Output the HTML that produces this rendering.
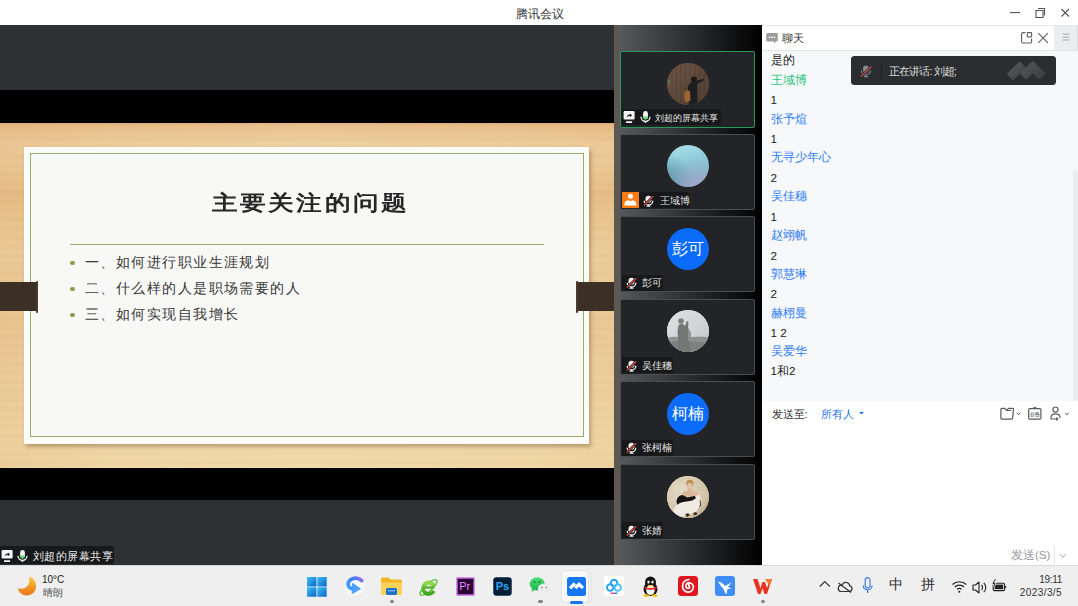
<!DOCTYPE html>
<html><head><meta charset="utf-8">
<style>
*{margin:0;padding:0;box-sizing:border-box}
html,body{width:1078px;height:606px;overflow:hidden;background:#fff;font-family:"Liberation Sans",sans-serif}
.a{position:absolute}
#title{left:0;top:0;width:1078px;height:25px;background:#fff}
#title .t{left:515.5px;top:6px;font-size:11.5px;line-height:16px;color:#333;white-space:nowrap}
#share{left:0;top:25px;width:614px;height:540px;background:#2e3134;overflow:hidden}
.blk{background:#000}
#wood{left:0;top:98px;width:614px;height:345px;
 background:
 repeating-linear-gradient(180deg,rgba(255,240,210,0) 0px,rgba(255,240,210,.07) 2px,rgba(200,140,80,0) 4px,rgba(200,140,80,.03) 7px,rgba(255,240,210,0) 9px),
 linear-gradient(90deg,rgba(215,140,80,.12) 0%,rgba(215,140,80,0) 18%,rgba(255,245,220,.08) 50%,rgba(215,140,80,0) 85%,rgba(215,140,80,.06) 100%),
 linear-gradient(180deg,#e0aa74 0px,#e8bf8a 4px,#ebcd9a 22px,#eaca95 45px,#e6be88 70px,#e9c791 95px,#eccf9a 130px,#eaca95 200px,#ecd09c 250px,#efd7a6 320px,#eed5a3 345px)}
#paper{left:24px;top:24px;width:565px;height:297px;background:#fcfcfb;box-shadow:2px 3px 4px rgba(90,60,20,.35)}
#pline{left:6px;top:6px;width:554px;height:284px;border:1.3px solid #97ab6a;background:#f8f8f7}
#stitle{left:4px;top:41px;width:565px;text-align:center;font-size:25px;font-weight:bold;color:#262626;letter-spacing:3.1px;transform:scaleY(.82);line-height:30px;white-space:nowrap}
#hr{left:46px;top:97px;width:474px;height:1.3px;background:#9aae68}
.bul{left:61px;font-size:13.5px;color:#383838;letter-spacing:1.45px;line-height:16px;white-space:nowrap}
.dot{left:-15px;top:5.5px;width:4.6px;height:4.6px;border-radius:50%;background:#86a04a}
.tab{background:#3b2f26}
#vcol{left:614px;top:25px;width:148px;height:540px;background:linear-gradient(90deg,#55585c 0px,#55585c 6px,#000 148px)}
#vsep{left:614px;top:25px;width:6px;height:540px;background:#5e5854}
.tile{left:620px;width:135px;height:76px;background:#232427;border:1px solid #4a4c50;border-radius:2px}
.av{left:46px;top:10.6px;width:42px;height:42px;border-radius:50%;overflow:hidden}
.lab{left:1px;height:16px;background:#17181a;border-radius:0 2px 0 0}
.lab .n{position:absolute;top:2.6px;font-size:10px;line-height:12px;color:#e8e8e8;white-space:nowrap}
#chat{left:762px;top:25px;width:316px;height:540px;background:#f7f8fa}
#chead{left:0;top:0;width:316px;height:26px;background:#fff;border-top:1px solid #e8e8e8;border-bottom:1px solid #e3e4e6}
.msg{left:8.6px;font-size:11.7px;line-height:16px;color:#222;white-space:nowrap}
.nm{left:8.8px;font-size:11.5px;line-height:16px;color:#2f7cf5;white-space:nowrap}
#input{left:0;top:376px;width:316px;height:164px;background:#fff}
#task{left:0;top:565px;width:1078px;height:41px;background:#efefef;border-top:1px solid #d9d9d9}
.ti{top:11px;width:20px;height:20px}
</style></head><body>
<svg width="0" height="0" style="position:absolute">
<defs>
 <symbol id="mmic" viewBox="0 0 12 12">
  <rect x="2.7" y="0.2" width="6.6" height="7.6" rx="3.3" fill="#f0f0f0"/>
  <path d="M1.3 5.6a4.7 4.7 0 0 0 9.4 0" stroke="#f0f0f0" stroke-width="1.4" fill="none"/>
  <path d="M6 10v1.6M3.9 11.5h4.2" stroke="#f0f0f0" stroke-width="1.4"/>
  <path d="M0.9 11.1L11.2 0.8" stroke="#17181a" stroke-width="2.6"/>
  <path d="M0.9 11.1L11.2 0.8" stroke="#e4463b" stroke-width="1.3"/>
 </symbol>
 <symbol id="mic" viewBox="0 0 11 13">
  <path d="M3.1 2.4a2.4 2.4 0 0 1 4.8 0v3.6a2.4 2.4 0 0 1-4.8 0z" fill="#f6f6f6"/>
  <path d="M3.1 5.6h4.8v.4a2.4 2.4 0 0 1-4.8 0z" fill="#55e068"/>
  <path d="M1 5.8a4.5 4.5 0 0 0 9 0" stroke="#f6f6f6" stroke-width="1.3" fill="none"/>
  <path d="M5.5 10v2" stroke="#f6f6f6" stroke-width="1.4"/>
 </symbol>
 <symbol id="scr" viewBox="0 0 12 13">
  <rect x="0.6" y="0" width="11" height="8.4" rx="1.2" fill="#f6f6f6"/>
  <path d="M3.6 6.3c.3-1.7 1.5-2.7 3.3-2.8V2.4l2.2 1.9-2.2 1.9V5c-1.3 0-2.4.4-3.3 1.3z" fill="#1a1a1a"/>
  <rect x="3" y="10.2" width="6.2" height="1.7" rx=".4" fill="#f6f6f6"/>
 </symbol>
</defs></svg>
<div id="title" class="a"><div class="t a">腾讯会议</div>
 <svg class="a" style="left:1005px;top:5px" width="70" height="16" viewBox="0 0 70 16">
  <path d="M5 7.6H15" stroke="#555" stroke-width="1.1"/>
  <path d="M31 5.5h7v7h-7z" stroke="#555" stroke-width="1.1" fill="none"/>
  <path d="M33 3.5h6.5v7" stroke="#555" stroke-width="1.1" fill="none"/>
  <path d="M56.5 4L64 11.5M64 4L56.5 11.5" stroke="#555" stroke-width="1.1"/>
 </svg>
</div>

<div id="share" class="a">
 <div class="a blk" style="left:0;top:65px;width:614px;height:410px"></div>
 <div id="wood" class="a">
  <div id="paper" class="a">
   <div id="pline" class="a"></div>
   <div id="stitle" class="a">主要关注的问题</div>
   <div id="hr" class="a"></div>
   <div class="a bul" style="top:108px"><span class="a dot"></span>一、如何进行职业生涯规划</div>
   <div class="a bul" style="top:134px"><span class="a dot"></span>二、什么样的人是职场需要的人</div>
   <div class="a bul" style="top:160px"><span class="a dot"></span>三、如何实现自我增长</div>
  </div>
  <div class="a tab" style="left:0;top:159px;width:37px;height:29px"></div><div class="a tab" style="left:36px;top:157.5px;width:2.2px;height:32px;border-radius:1px;background:#4a3a2c"></div>
  <div class="a tab" style="left:577px;top:159px;width:37px;height:29px"></div><div class="a tab" style="left:575.8px;top:157.5px;width:2.2px;height:32px;border-radius:1px;background:#4a3a2c"></div>
 </div>
 <div class="a" style="left:0;top:520.6px;width:114px;height:18.2px;background:#17191b;border-radius:0 3px 3px 0">
  <svg class="a" style="left:0.5px;top:4.5px" width="12" height="13"><use href="#scr"/></svg><svg class="a" style="left:16.5px;top:4.5px" width="11" height="13"><use href="#mic"/></svg><div class="a" style="left:32.5px;top:3.4px;font-size:11.4px;letter-spacing:0.5px;line-height:14px;color:#eee;white-space:nowrap">刘超的屏幕共享</div>
 </div>
</div>

<div id="vcol" class="a"></div>
<div id="vsep" class="a"></div>

<div class="a tile" style="top:51px;height:77px;border:1.3px solid #2a9a5a"><div class="a av" style="background:#5a4539"><svg width="42" height="42" viewBox="0 0 42 42">
<defs><linearGradient id="wd" x1="0" y1="0" x2="1" y2="1"><stop offset="0" stop-color="#6e5646"/><stop offset="1" stop-color="#4f3d32"/></linearGradient></defs>
<rect width="42" height="42" fill="url(#wd)"/>
<g stroke="#3e2e25" stroke-width="1.1" opacity=".3"><path d="M5 0v42M9.5 0v42M14 0v42M18.5 0v42M23 0v42M28 0v42M33 0v42M37.5 0v42"/></g>
<path d="M0.5 15.5q2.5 1 3 3.5-.5 2.5-2.5 3z" fill="#5d7448" opacity=".8"/>
<path d="M21 24q.5-4 5-5.5l3-.5 7.5-2.3.8 1.6-6.5 3.3-.5 1.5.2 20h-8.5l-.5-6q-1.5-6-.5-12z" fill="#1d1e21"/>
<circle cx="27" cy="16.3" r="2.9" fill="#17181b"/>
<path d="M17.3 30.5q.8-3.2 3.6-3.3l2.3 1.3.2 9q-2.2 2-5 1.2-1.5-3-1.1-8.2z" fill="#9c6430"/>
</svg></div>
 <div class="a lab" style="left:1px;top:57.4px;width:99px"><svg class="a" style="left:1px;top:2px" width="12" height="13"><use href="#scr"/></svg><svg class="a" style="left:17.5px;top:2px" width="11" height="13"><use href="#mic"/></svg><div class="n" style="left:33px;font-size:9.3px">刘超的屏幕共享</div></div></div>
<div class="a tile" style="top:133.6px"><div class="a av" style="background:radial-gradient(circle at 70% 100%,rgba(170,160,205,.75) 0,rgba(160,160,200,0) 55%),radial-gradient(circle at 0% 85%,rgba(90,140,160,.8) 0,rgba(90,140,160,0) 50%),linear-gradient(165deg,#b0e2ea 0%,#8fd0dc 35%,#86bccb 65%,#8aa8bf 100%)"></div>
 <div class="a lab" style="top:57.4px;width:67px;background:#17181a"><div class="a" style="left:0;top:0;width:17px;height:16px;background:#f97d16"></div><svg class="a" style="left:0;top:0" width="17" height="16" viewBox="0 0 17 16"><circle cx="8.4" cy="4.3" r="2.5" fill="#fff"/><path d="M2.3 13.4Q2.3 8.6 6.2 8.2Q8.4 9.6 10.6 8.2Q14.5 8.6 14.5 13.4z" fill="#fff"/></svg><svg class="a" style="left:21px;top:2.6px" width="11" height="12"><use href="#mmic"/></svg><div class="n" style="left:38px">王域博</div></div></div>
<div class="a tile" style="top:216.2px"><div class="a av" style="background:#0b6bfb;color:#fff;font-size:15.5px;text-align:center;line-height:42px">彭可</div>
 <div class="a lab" style="top:57.4px;width:41px"><svg class="a" style="left:4px;top:2.6px" width="11" height="12"><use href="#mmic"/></svg><div class="n" style="left:20px">彭可</div></div></div>
<div class="a tile" style="top:298.8px"><div class="a av" style="background:#c9cdcc"><svg width="42" height="42" viewBox="0 0 42 42">
<defs><linearGradient id="sk" x1="0" y1="0" x2="1" y2="1"><stop offset="0" stop-color="#dfe3e3"/><stop offset="1" stop-color="#c3c7c7"/></linearGradient></defs>
<rect width="42" height="42" fill="url(#sk)"/>
<path d="M0 28q6-2 12-1t14 0 16 .5V42H0z" fill="#8e9290"/>
<path d="M0 33q10-3 20-2t22 1V42H0z" fill="#7d817f"/>
<path d="M11 16q2-3 5-2l2 2 2-5 1.5 1-.5 6 2 3 .5 21h-13l.5-14q-1-8 .5-12z" fill="#727874"/>
<circle cx="14" cy="11" r="2.8" fill="#7a7f7c"/>
<path d="M21 18l3 5-.5 10-2.5-3z" fill="#8d9290"/>
</svg></div>
 <div class="a lab" style="top:57.4px;width:51px"><svg class="a" style="left:4px;top:2.6px" width="11" height="12"><use href="#mmic"/></svg><div class="n" style="left:20px">吴佳穗</div></div></div>
<div class="a tile" style="top:381.4px"><div class="a av" style="background:#0b6bfb;color:#fff;font-size:15.5px;text-align:center;line-height:42px">柯楠</div>
 <div class="a lab" style="top:57.4px;width:51px"><svg class="a" style="left:4px;top:2.6px" width="11" height="12"><use href="#mmic"/></svg><div class="n" style="left:20px">张柯楠</div></div></div>
<div class="a tile" style="top:464px"><div class="a av" style="background:#d4c6a9"><svg width="42" height="42" viewBox="0 0 42 42">
<defs><radialGradient id="bg6" cx=".35" cy=".35" r=".85"><stop offset="0" stop-color="#e4dac6"/><stop offset=".7" stop-color="#d2c3a6"/><stop offset="1" stop-color="#a8916e"/></radialGradient></defs>
<rect width="42" height="42" fill="url(#bg6)"/>
<path d="M16 16q6.5-3.5 14 0l2 6-17 1z" fill="#d9b999"/>
<ellipse cx="22.8" cy="7.4" rx="3.6" ry="3.6" fill="#bf8f55"/>
<ellipse cx="22.8" cy="10" rx="2.6" ry="3.2" fill="#e0c3a4"/>
<path d="M21.2 12.5h3.2v4h-3.2z" fill="#d8b796"/>
<path d="M9.5 25q1-5.5 6-6l5 2.5 7-1.5 5.5 1.5.8 8-3 4.5H11z" fill="#151414"/>
<path d="M6.5 33.5q3.5-7 10-7.5l9-1.5q4-3.5 7-2.5l.5 7q-1 6-6.5 8l-8 3q-8 1.5-12.5-1.5z" fill="#efebe3"/>
<path d="M28 20l4.5-1.5 1.5 5.5-4 1.5z" fill="#ece6da"/>
<path d="M18 38.5l3-1.5 2 2-3 2zM26 37l3-1 1.5 2-3 1.5z" fill="#3b3028"/>
</svg></div>
 <div class="a lab" style="top:57.4px;width:41px"><svg class="a" style="left:4px;top:2.6px" width="11" height="12"><use href="#mmic"/></svg><div class="n" style="left:20px">张婧</div></div></div>

<div id="chat" class="a">
 <div id="chead" class="a">
  <svg class="a" style="left:4px;top:6px" width="13" height="13" viewBox="0 0 13 13"><path d="M1.5 1h9a1.3 1.3 0 0 1 1.3 1.3v6a1.3 1.3 0 0 1-1.3 1.3H10l-1.7 1.8-.3-1.8H1.5A1.3 1.3 0 0 1 .2 8.3v-6A1.3 1.3 0 0 1 1.5 1z" fill="#9b9b9b"/><circle cx="3.6" cy="5.3" r=".9" fill="#fff"/><circle cx="6" cy="5.3" r=".9" fill="#fff"/><circle cx="8.4" cy="5.3" r=".9" fill="#fff"/></svg>
  <div class="a" style="left:20px;top:4.6px;font-size:10.7px;line-height:14px;color:#333">聊天</div>
  <svg class="a" style="left:258px;top:5px" width="30" height="13" viewBox="0 0 30 13"><path d="M5.5 1.6H2.8a1.2 1.2 0 0 0-1.2 1.2v8a1.2 1.2 0 0 0 1.2 1.2h7.6a1.2 1.2 0 0 0 1.2-1.2V7.6" stroke="#5c5f66" stroke-width="1.1" fill="none"/><rect x="7.3" y="1.6" width="4.3" height="4.3" rx=".6" stroke="#5c5f66" stroke-width="1.1" fill="none"/><path d="M18.3 2.2l9.6 9.6M27.9 2.2l-9.6 9.6" stroke="#5c5f66" stroke-width="1.1"/></svg>
 </div>
 <div class="a" style="left:292px;top:1px;width:24px;height:24px;background:#ebedf0;border-right:1px solid #dcdde0"><svg class="a" style="left:8px;top:7.4px" width="8" height="8" viewBox="0 0 8 8"><path d="M.5 1.2h7M.5 4.2h7M.5 7h7" stroke="#a9abb0" stroke-width="1"/></svg></div>
 <div class="a msg" style="top:27px">是的</div>
 <div class="a nm" style="top:47px;color:#1fc47a">王域博</div>
 <div class="a msg" style="top:67px">1</div>
 <div class="a nm" style="top:86px">张予煊</div>
 <div class="a msg" style="top:106px">1</div>
 <div class="a nm" style="top:124px">无寻少年心</div>
 <div class="a msg" style="top:145px">2</div>
 <div class="a nm" style="top:163px">吴佳穗</div>
 <div class="a msg" style="top:184px">1</div>
 <div class="a nm" style="top:202px">赵翊帆</div>
 <div class="a msg" style="top:223px">2</div>
 <div class="a nm" style="top:241px">郭慧琳</div>
 <div class="a msg" style="top:261px">2</div>
 <div class="a nm" style="top:280px">赫栩曼</div>
 <div class="a msg" style="top:300px">1 2</div>
 <div class="a nm" style="top:318px">吴爱华</div>
 <div class="a msg" style="top:338px">1和2</div>
 <div class="a" style="left:311px;top:145px;width:5px;height:231px;background:#ebecef;border-radius:2px"></div>
 <div class="a" style="left:89px;top:30.7px;width:205px;height:29.6px;background:#2b2e31;border-radius:3.5px">
  <svg class="a" style="left:9px;top:9px" width="12" height="13" viewBox="0 0 12 13"><rect x="3.1" y="0.4" width="5.6" height="7.6" rx="2.8" fill="#85888d"/><path d="M1.4 5.4a4.5 4.5 0 0 0 9 0" stroke="#85888d" stroke-width="1.2" fill="none"/><path d="M5.9 9.9v1.6M3.9 11.6h4" stroke="#85888d" stroke-width="1.2"/><path d="M0.6 11.6L11.6 1.4" stroke="#2b2e31" stroke-width="2.4"/><path d="M0.6 11.6L11.6 1.4" stroke="#d8463c" stroke-width="1.2"/></svg>
  <div class="a" style="left:29.5px;top:7px;width:1.2px;height:16px;background:#1c1e20"></div>
  <svg class="a" style="left:155px;top:5.6px" width="42" height="21" viewBox="0 0 42 21"><defs><linearGradient id="lg1" x1="0" y1="0" x2="1" y2="1"><stop offset="0" stop-color="#5a5c60"/><stop offset="1" stop-color="#3d3f42"/></linearGradient></defs><g fill="url(#lg1)" stroke="url(#lg1)" stroke-width="2.4" stroke-linejoin="round"><path d="M2.4 13.2L13.6 2 18.2 6.6 7 17.8z"/><path d="M15.4 12.4L26.8 1.6 37.9 12.7 33.5 17.1 26.9 10.5 20.3 17.1z" opacity=".92"/></g></svg>
  <div class="a" style="left:38px;top:9.5px;font-size:10.8px;line-height:13px;color:#ddd;white-space:nowrap;letter-spacing:-0.9px">正在讲话: 刘超;</div>
 </div>
 <div id="input" class="a">
  <div class="a" style="left:9.6px;top:5.6px;font-size:11.2px;line-height:15px;color:#333">发送至:</div>
  <div class="a" style="left:58.8px;top:5.5px;font-size:11.4px;line-height:15px;color:#1f74f0">所有人</div>
  <svg class="a" style="left:97.2px;top:11.2px" width="5" height="3" viewBox="0 0 5 3"><path d="M0 0h5L2.5 2.6z" fill="#1f74f0"/></svg>
  <svg class="a" style="left:237px;top:4px" width="72" height="16" viewBox="0 0 72 16">
   <path d="M12.6 14.1H2.9Q1.9 14.1 1.9 13.1V4.3Q1.9 3.3 2.9 3.3H5.7L7.7 5.5H12.2" stroke="#575b63" stroke-width="1.2" fill="none" stroke-linejoin="round"/>
   <path d="M7.7 5.5L9.4 3.3H13.5Q14.6 3.3 14.5 4.3L13.6 13.1Q13.5 14.1 12.5 14.1" stroke="#575b63" stroke-width="1.2" fill="none" stroke-linejoin="round"/>
   <path d="M17.7 7.8l1.9 1.7 1.9-1.7" stroke="#575b63" stroke-width="1" fill="none"/>
   <rect x="29.7" y="3.6" width="12.2" height="10.5" rx="1.2" stroke="#575b63" stroke-width="1.2" fill="none"/>
   <path d="M34 3.6q1.8-2.6 3.6 0" stroke="#575b63" stroke-width="1.1" fill="none"/>
   <text x="35.8" y="11.3" font-size="5" font-weight="bold" text-anchor="middle" fill="#575b63" font-family="Liberation Sans">公告</text>
   <circle cx="56.5" cy="4.6" r="2.6" stroke="#575b63" stroke-width="1.2" fill="none"/>
   <path d="M52 14v-1.4c0-2.2 1.8-3.7 4.5-3.7s4.5 1.5 4.5 3.7M52 14h6.8l-1.1 1.1M58.8 14l-1.1-1.1" stroke="#575b63" stroke-width="1.2" fill="none" stroke-linecap="round" stroke-linejoin="round"/>
   <path d="M66 8l1.9 1.7 1.9-1.7" stroke="#575b63" stroke-width="1" fill="none"/>
  </svg>
  <div class="a" style="left:249px;top:146px;font-size:11.6px;line-height:16px;color:#999">发送(S)</div>
  <div class="a" style="left:292px;top:144.5px;width:1px;height:18px;background:#e3e3e3"></div>
  <svg class="a" style="left:297px;top:152px" width="8" height="6" viewBox="0 0 8 6"><path d="M1 1.2l3 3 3-3" stroke="#aaa" stroke-width="1" fill="none"/></svg>
 </div>
</div>

<div id="task" class="a">

 <svg class="a" style="left:15px;top:9px" width="24" height="22" viewBox="0 0 24 22"><defs><linearGradient id="moon" x1="0" y1="0" x2="0" y2="1"><stop offset="0" stop-color="#f9c93c"/><stop offset="1" stop-color="#ea7418"/></linearGradient><mask id="mm"><rect width="24" height="22" fill="#fff"/><circle cx="6.2" cy="5.6" r="8.2" fill="#000"/></mask></defs><circle cx="11.8" cy="11" r="9.4" fill="url(#moon)" mask="url(#mm)"/></svg>
 <svg class="a" style="left:306px;top:10px" width="22" height="22" viewBox="0 0 22 22"><defs><linearGradient id="win" x1="0" y1="0" x2="1" y2="1"><stop offset="0" stop-color="#3ec1f7"/><stop offset="1" stop-color="#0a64c9"/></linearGradient></defs><rect x="1" y="1" width="9.4" height="9.4" rx=".5" fill="url(#win)"/><rect x="11.3" y="1" width="9.4" height="9.4" rx=".5" fill="url(#win)"/><rect x="1" y="11.3" width="9.4" height="9.4" rx=".5" fill="url(#win)"/><rect x="11.3" y="11.3" width="9.4" height="9.4" rx=".5" fill="url(#win)"/></svg>
 <svg class="a" style="left:344px;top:10px" width="21" height="21" viewBox="0 0 21 21"><defs><linearGradient id="sw" x1="1" y1="0" x2="0" y2="1"><stop offset="0" stop-color="#9a6cf0"/><stop offset=".35" stop-color="#3d7ef5"/><stop offset="1" stop-color="#42a6ff"/></linearGradient></defs><circle cx="10.5" cy="10.5" r="9.6" fill="#f8f8f8"/><path d="M17.6 4.6C15 1.6 9.5 1 6 4.2 3 7 3.6 11.4 7.6 12.6" stroke="url(#sw)" stroke-width="3.8" fill="none" stroke-linecap="round"/><path d="M8.6 7.4L16.4 12.8 8.2 17.6z" fill="#4aa0ff" stroke="#4aa0ff" stroke-width="1" stroke-linejoin="round"/></svg>
 <svg class="a" style="left:380px;top:10px" width="23" height="20" viewBox="0 0 23 20"><path d="M1 3a1.5 1.5 0 0 1 1.5-1.5h6l2 2h10a1.5 1.5 0 0 1 1.5 1.5v12.5a1.5 1.5 0 0 1-1.5 1.5h-18A1.5 1.5 0 0 1 1 17.5z" fill="#f2b824"/><path d="M1 6.5h21v11a1.5 1.5 0 0 1-1.5 1.5h-18A1.5 1.5 0 0 1 1 17.5z" fill="#fbd35a"/><rect x="6" y="12" width="11" height="7" rx="1.5" fill="#1d72c9"/><rect x="8" y="14" width="7" height="1.4" fill="#6fb3f0"/></svg>
 <div class="a" style="left:389.5px;top:34px;width:4.5px;height:2.5px;border-radius:1.5px;background:#858585"></div>
 <svg class="a" style="left:418px;top:10px" width="21" height="22" viewBox="0 0 21 22"><defs><linearGradient id="ie" x1="0" y1="0" x2="0" y2="1"><stop offset="0" stop-color="#8fd94a"/><stop offset="1" stop-color="#3ba51d"/></linearGradient></defs><ellipse cx="10.5" cy="11.5" rx="11" ry="3.6" transform="rotate(-42 10.5 11.5)" stroke="#62c23a" stroke-width="1.4" fill="none"/><path d="M15.8 14.8A5.7 5.7 0 1 1 16.1 10.4" stroke="url(#ie)" stroke-width="3.8" fill="none"/><rect x="5" y="10.2" width="11.2" height="2.6" fill="#5dbb33"/></svg>
 <svg class="a" style="left:456px;top:10.7px" width="19" height="19" viewBox="0 0 20 20"><rect x="0.3" y="0.3" width="19.4" height="19.4" rx="1" fill="#c86ee6"/><rect x="1.8" y="1.8" width="16.4" height="16.4" rx=".5" fill="#2a0433"/><text x="3.4" y="13.4" font-size="11.5" font-family="Liberation Sans" fill="#e58cff">Pr</text></svg>
 <svg class="a" style="left:493px;top:10.7px" width="19" height="19" viewBox="0 0 20 20"><rect x="0.3" y="0.3" width="19.4" height="19.4" rx="3.5" fill="#001e36"/><text x="3" y="13.4" font-size="11.5" font-weight="bold" font-family="Liberation Sans" fill="#31a8ff">Ps</text></svg>
 <svg class="a" style="left:529px;top:10px" width="23" height="21" viewBox="0 0 23 21"><defs><linearGradient id="wx" x1="0" y1="0" x2="0" y2="1"><stop offset="0" stop-color="#4fe07a"/><stop offset="1" stop-color="#20b64f"/></linearGradient></defs><ellipse cx="8.2" cy="7.8" rx="7.6" ry="6.6" fill="url(#wx)"/><path d="M3.2 12.5l-.6 3.2 3.4-1.9z" fill="#22b850"/><circle cx="5.6" cy="5.8" r=".9" fill="#1a5d30"/><circle cx="10.6" cy="5.8" r=".9" fill="#1a5d30"/><ellipse cx="15.2" cy="13" rx="6.4" ry="5.4" fill="#ececec"/><path d="M18.5 17.2l1.2 2.2-3.2-1.2z" fill="#ececec"/><circle cx="12.9" cy="11.6" r=".75" fill="#777"/><circle cx="17.3" cy="11.6" r=".75" fill="#777"/></svg>
 <div class="a" style="left:538px;top:34px;width:4.5px;height:2.5px;border-radius:1.5px;background:#858585"></div>
 <div class="a" style="left:563px;top:5.5px;width:29px;height:31px;border:1px solid #e6e6e6;border-radius:4px"></div><div class="a" style="left:561px;top:4.3px;width:28px;height:32.7px;background:#f8f8f8;border:1px solid #e3e3e3;border-radius:4px"></div>
 <svg class="a" style="left:567px;top:11px" width="19" height="19" viewBox="0 0 19 19"><rect x="0" y="0" width="19" height="19" rx="2.5" fill="#1677f5"/><g transform="translate(1.4 4.9) scale(.4)" fill="#fff" stroke="#fff" stroke-width="2.4" stroke-linejoin="round"><path d="M2.4 13.2L13.6 2 18.2 6.6 7 17.8z"/><path d="M15.4 12.4L26.8 1.6 37.9 12.7 33.5 17.1 26.9 10.5 20.3 17.1z"/></g></svg>
 <div class="a" style="left:570px;top:35px;width:13px;height:2.5px;border-radius:1.5px;background:#1677f5"></div>
 <svg class="a" style="left:603.5px;top:10px" width="20" height="20" viewBox="0 0 20 20"><rect x="0" y="0" width="20" height="20" rx="3" fill="#fff"/><circle cx="10" cy="7" r="3.2" stroke="#2aa4f0" stroke-width="2" fill="none"/><circle cx="6.2" cy="11.5" r="3.2" stroke="#2aa4f0" stroke-width="2" fill="none"/><circle cx="13.8" cy="11.5" r="3.2" stroke="#4dc3ff" stroke-width="2" fill="none"/><rect x="6.5" y="16.5" width="3.5" height="1.5" fill="#f0506e"/><rect x="10" y="16.5" width="3.5" height="1.5" fill="#3b82f6"/></svg>
 <svg class="a" style="left:641px;top:9.5px" width="19" height="21" viewBox="0 0 19 21"><ellipse cx="9.5" cy="13" rx="7" ry="7" fill="#111"/><ellipse cx="9.5" cy="6.5" rx="5.5" ry="6" fill="#111"/><ellipse cx="9.5" cy="14" rx="4.3" ry="5" fill="#fff"/><ellipse cx="7.5" cy="6" rx="1.2" ry="1.6" fill="#fff"/><ellipse cx="11.5" cy="6" rx="1.2" ry="1.6" fill="#fff"/><path d="M6.5 8.5q3 1.8 6 0l-.8 1.6q-2.2 1-4.4 0z" fill="#f6b800"/><path d="M3.5 10.5q6 3 12 0l.5 1.8q-6.5 3-13 0z" fill="#e4262c"/><path d="M13 11.5l2 3-1.6.6z" fill="#e4262c"/><ellipse cx="5.5" cy="19.5" rx="3" ry="1.3" fill="#f6b800"/><ellipse cx="13.5" cy="19.5" rx="3" ry="1.3" fill="#f6b800"/></svg>
 <svg class="a" style="left:678px;top:10px" width="20" height="20" viewBox="0 0 20 20"><rect x="0" y="0" width="20" height="20" rx="3.5" fill="#e0151f"/><path d="M11 3.5c-4 .5-6.5 3.3-6.5 6.8 0 3.3 2.5 5.8 5.6 5.8 3 0 5.3-2.2 5.3-5 0-2.4-1.8-4.3-4.2-4.3-1.8 0-3.2 1.4-3.2 3.1 0 1.4 1 2.4 2.3 2.4" stroke="#fff" stroke-width="1.7" fill="none" stroke-linecap="round"/><path d="M10.2 6.8l1.4 5.2" stroke="#fff" stroke-width="1.7" stroke-linecap="round"/></svg>
 <svg class="a" style="left:715px;top:10px" width="20" height="20" viewBox="0 0 20 20"><rect x="0" y="0" width="20" height="20" rx="3" fill="#3f8ef5"/><path d="M3 5.5q4 .5 7 4.5l6.5-3.5-3.5 4.5 3.5 1.5-4 .5q-1 3-.5 5.5-3-2-3.5-5.5Q5 9.5 3 5.5z" fill="#fff"/></svg>
 <svg class="a" style="left:752px;top:10px" width="21" height="20" viewBox="0 0 21 20"><path d="M1 3h4.5l3 9 2-6h2.5l2 6 3-9H20l-5 15h-2.5l-2-6-2 6H6z" fill="#e8321e"/><path d="M13 3h7l-2.5 7z" fill="#f57a2a"/></svg>
 <div class="a" style="left:760.5px;top:34px;width:4.5px;height:2.5px;border-radius:1.5px;background:#858585"></div>
 <svg class="a" style="left:816px;top:10.8px" width="196" height="20" viewBox="0 0 196 20">
  <path d="M3.8 9.5l5-5 5 5" stroke="#333" stroke-width="1.1" fill="none"/>
  <path d="M25 14.5h8.3a2.9 2.9 0 0 0 .5-5.7 4 4 0 0 0-7.7-.7 3.2 3.2 0 0 0-1.1 6.4z" stroke="#333" stroke-width="1.2" fill="none"/>
  <path d="M22.5 6l12.5 9.5" stroke="#333" stroke-width="1.2"/>
  <path d="M49.2 3a2.4 2.4 0 0 1 4.8 0v5.4a2.4 2.4 0 0 1-4.8 0z" stroke="#3d7de0" stroke-width="1.2" fill="none"/>
  <path d="M47.2 8.4a4.4 4.4 0 0 0 8.8 0M51.6 12.8v3.2" stroke="#3d7de0" stroke-width="1.3" fill="none"/>
  <path d="M136.5 7.5a10 10 0 0 1 13.8 0M138.8 10a6.6 6.6 0 0 1 9.2 0M141 12.4a3.2 3.2 0 0 1 4.6 0" stroke="#222" stroke-width="1.2" fill="none"/><circle cx="143.3" cy="14.8" r="1" fill="#222"/>
  <path d="M157 8h2.5l3.5-3v11l-3.5-3H157z" stroke="#222" stroke-width="1.1" fill="none" stroke-linejoin="round"/><path d="M165.5 8a3.5 3.5 0 0 1 0 5M167.8 5.8a6.6 6.6 0 0 1 0 9.4" stroke="#222" stroke-width="1.1" fill="none"/>
  <rect x="177.2" y="6.2" width="11.4" height="7.4" rx="1.2" stroke="#222" stroke-width="1.1" fill="none"/><rect x="178.6" y="7.6" width="8.6" height="4.6" fill="#222"/><path d="M189.2 8.4l1.5 1.5-1.5 1.5z" fill="#222"/><path d="M179.5 2.2l-2.6 4.2h2.2l-1.4 3.4" stroke="#efefef" stroke-width="2.2" fill="none"/><path d="M179.5 2.2l-2.6 4.2h2.2l-1.4 3.4" stroke="#222" stroke-width="1" fill="none"/>
 </svg>
 <div class="a" style="left:888.5px;top:11px;font-size:13.5px;line-height:16px;color:#2a2a2a">中</div>
 <div class="a" style="left:920.5px;top:11px;font-size:13.5px;line-height:16px;color:#2a2a2a">拼</div>
 <div class="a" style="left:42px;top:8px;font-size:10px;line-height:12px;color:#222">10°C</div>
 <div class="a" style="left:42.5px;top:20.5px;font-size:10.2px;line-height:12px;color:#555">晴朗</div>
 <div class="a" style="left:1020px;top:8px;width:42px;text-align:right;font-size:10px;line-height:12px;color:#333;letter-spacing:-0.3px">19:11</div>
 <div class="a" style="left:1008px;top:21px;width:54px;text-align:right;font-size:10px;line-height:12px;color:#333;letter-spacing:0.4px">2023/3/5</div>
</div>
</body></html>
